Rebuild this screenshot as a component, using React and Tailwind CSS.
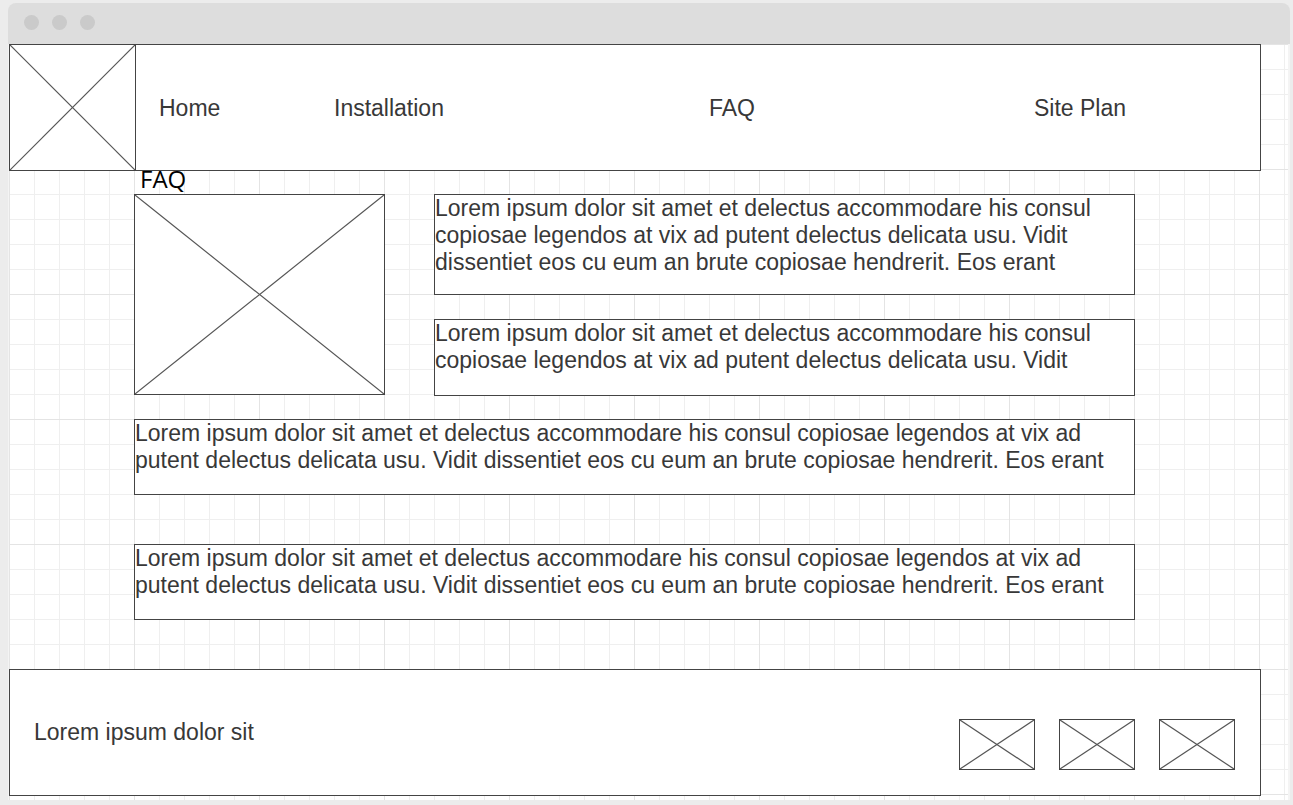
import React from "react";

function XBox({ className }) {
  return (
    <div className={"border border-[#444444] bg-white " + className}>
      <svg className="block w-full h-full" viewBox="0 0 100 100" preserveAspectRatio="none">
        <line x1="0" y1="0" x2="100" y2="100" stroke="#555555" strokeWidth="1.2" vectorEffect="non-scaling-stroke" />
        <line x1="100" y1="0" x2="0" y2="100" stroke="#555555" strokeWidth="1.2" vectorEffect="non-scaling-stroke" />
      </svg>
    </div>
  );
}

const LONG =
  "Lorem ipsum dolor sit amet et delectus accommodare his consul copiosae legendos at vix ad putent delectus delicata usu. Vidit dissentiet eos cu eum an brute copiosae hendrerit. Eos erant";
const SHORT =
  "Lorem ipsum dolor sit amet et delectus accommodare his consul copiosae legendos at vix ad putent delectus delicata usu. Vidit";

function TextBox({ className, children }) {
  return (
    <div className={"border border-[#444444] bg-white overflow-hidden text-[23px] leading-[27px] text-[#383838] " + className}>
      {children}
    </div>
  );
}

export default function App() {
  return (
    <div className="w-[1293px] h-[805px] overflow-hidden bg-[#ececec] pt-[3px] pl-[8px] font-['Liberation_Sans',Arial,sans-serif]">
      <div className="w-[1282px] h-[41px] rounded-t-[8px] bg-[#dddddd] flex items-start pt-[12px] pl-[16px] gap-[13px]">
        <div className="w-[15px] h-[15px] rounded-full bg-[#cacaca]" />
        <div className="w-[15px] h-[15px] rounded-full bg-[#cacaca]" />
        <div className="w-[15px] h-[15px] rounded-full bg-[#cacaca]" />
      </div>
      <div className="w-[1282px] h-[756px] bg-[#f4f4f4] pl-[1px] pr-[2px]">
        <div className="w-[1279px] h-[756px] bg-white bg-[linear-gradient(to_right,#e4e4e4_1px,transparent_1px),linear-gradient(to_bottom,#e4e4e4_1px,transparent_1px),linear-gradient(to_right,#efefef_1px,transparent_1px),linear-gradient(to_bottom,#efefef_1px,transparent_1px)] bg-[size:125px_125px,125px_125px,25px_25px,25px_25px] flex flex-col">
          {/* Header */}
          <div className="w-[1252px] h-[127px] border border-[#444444] bg-white flex items-stretch">
            <div className="w-[126px] h-full border-r border-[#444444] shrink-0">
              <svg className="block w-full h-full" viewBox="0 0 100 100" preserveAspectRatio="none">
                <line x1="0" y1="0" x2="100" y2="100" stroke="#555555" strokeWidth="1.2" vectorEffect="non-scaling-stroke" />
                <line x1="100" y1="0" x2="0" y2="100" stroke="#555555" strokeWidth="1.2" vectorEffect="non-scaling-stroke" />
              </svg>
            </div>
            <nav className="flex items-center pt-[1px] ml-[23px] text-[23px] text-[#383838]">
              <span className="w-[175px]">Home</span>
              <span className="w-[375px]">Installation</span>
              <span className="w-[325px]">FAQ</span>
              <span>Site Plan</span>
            </nav>
          </div>

          {/* Main */}
          <div className="pl-[125px] flex flex-col">
            <div className="h-[23px] leading-[16px] pl-[6px] text-[24px] text-black font-['Open_Sans',sans-serif]">FAQ</div>
            <div className="flex items-start">
              <XBox className="w-[251px] h-[201px] shrink-0" />
              <div className="ml-[49px] flex flex-col">
                <TextBox className="w-[701px] h-[101px]">{LONG}</TextBox>
                <TextBox className="w-[701px] h-[77px] mt-[24px]">{SHORT}</TextBox>
              </div>
            </div>
            <TextBox className="w-[1001px] h-[76px] mt-[23px]">{LONG}</TextBox>
            <TextBox className="w-[1001px] h-[76px] mt-[49px]">{LONG}</TextBox>
          </div>

          {/* Footer */}
          <div className="mt-[49px] w-[1252px] h-[127px] border border-[#444444] bg-white flex items-start">
            <div className="self-center pl-[24px] text-[23px] text-[#383838]">Lorem ipsum dolor sit</div>
            <div className="ml-auto mr-[25px] mt-[49px] flex gap-[24px]">
              <XBox className="w-[76px] h-[51px]" />
              <XBox className="w-[76px] h-[51px]" />
              <XBox className="w-[76px] h-[51px]" />
            </div>
          </div>
        </div>
      </div>
    </div>
  );
}
